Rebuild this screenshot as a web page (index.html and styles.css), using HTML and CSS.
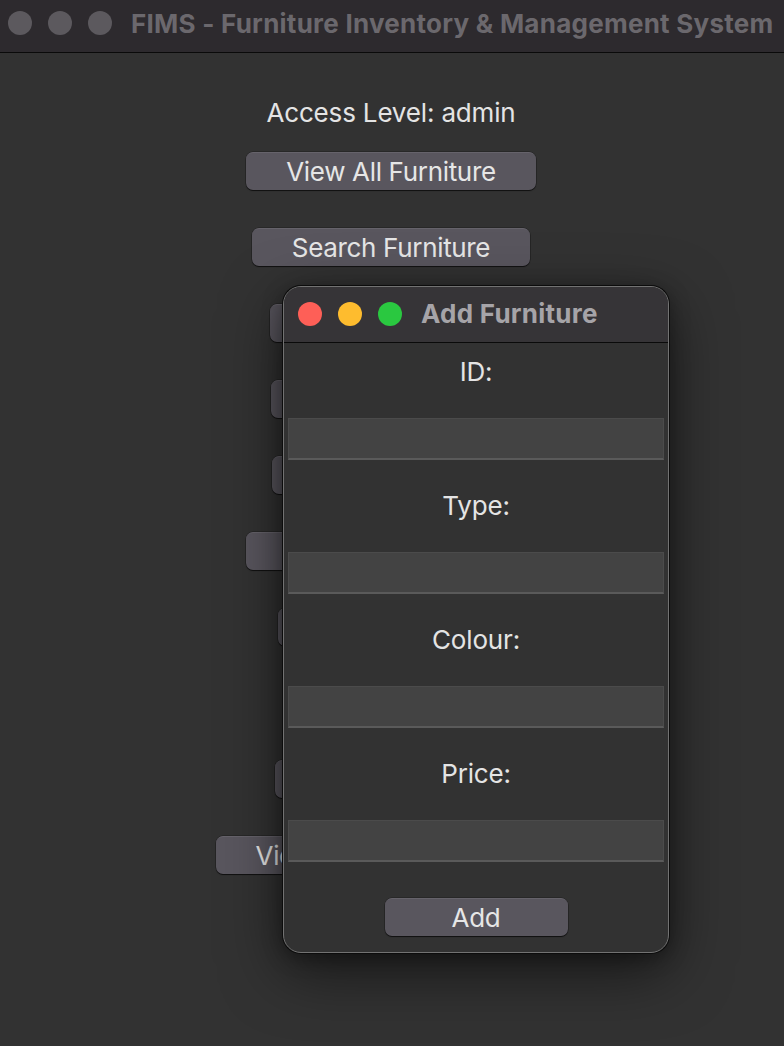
FILE: index.html
```html
<!DOCTYPE html>
<html lang="en">
<head>
<meta charset="utf-8">
<title>FIMS - Furniture Inventory &amp; Management System</title>
<link rel="stylesheet" href="styles.css">
</head>
<body>
<div class="screen">
  <div class="window main-window">
    <header class="titlebar titlebar--inactive">
      <div class="lights">
        <span class="light light--off"></span>
        <span class="light light--off"></span>
        <span class="light light--off"></span>
      </div>
      <div class="titlebar__title">FIMS - Furniture Inventory &amp; Management System</div>
    </header>
    <main class="main-body">
      <div class="access-label">Access Level: admin</div>
      <div class="menu">
        <button class="btn">View All Furniture</button>
        <button class="btn">Search Furniture</button>
        <button class="btn">Add Furniture</button>
        <button class="btn">Edit Furniture</button>
        <button class="btn">Sell Furniture</button>
        <button class="btn">Remove Furniture</button>
        <button class="btn">View Report</button>
        <button class="btn">Log Out</button>
        <button class="btn">Sales Report</button>
        <button class="btn">View Purchase History</button>
      </div>
    </main>
  </div>

  <section class="dialog">
    <header class="titlebar titlebar--active">
      <div class="lights">
        <span class="light light--close"></span>
        <span class="light light--min"></span>
        <span class="light light--max"></span>
      </div>
      <div class="titlebar__title">Add Furniture</div>
    </header>
    <div class="dialog__body">
      <label class="field-label">ID:</label>
      <div class="entry"></div>
      <label class="field-label">Type:</label>
      <div class="entry"></div>
      <label class="field-label">Colour:</label>
      <div class="entry"></div>
      <label class="field-label">Price:</label>
      <div class="entry"></div>
      <button class="btn btn--add">Add</button>
    </div>
  </section>
</div>
</body>
</html>
```
FILE: styles.css
```css
* { box-sizing: border-box; }

html, body {
  margin: 0;
  padding: 0;
  background: #323232;
}

body {
  font-family: Inter, "Noto Sans", "Liberation Sans", sans-serif;
  color: #e2e2e2;
  width: 784px;
  height: 1046px;
  overflow: hidden;
}

.screen {
  position: relative;
  width: 784px;
  height: 1046px;
  overflow: hidden;
}

.main-window {
  display: flex;
  flex-direction: column;
  height: 100%;
  background: #323232;
}

/* ---------- title bars ---------- */
.titlebar {
  display: flex;
  align-items: center;
  flex-shrink: 0;
  border-bottom: 1px solid #0a0a0a;
  font-weight: 700;
  font-size: 26px;
  white-space: nowrap;
}

.titlebar--inactive {
  height: 53px;
  padding: 0 0 6px 8px;
  background: #2d2a2e;
  color: #6b686d;
}

.titlebar--active {
  height: 56px;
  padding: 0 0 2px 14px;
  background: #363437;
  color: #a6a4a8;
}

.lights {
  display: flex;
  gap: 16px;
  margin-right: 19px;
}

.light {
  width: 24px;
  height: 24px;
  border-radius: 50%;
  display: block;
}

.light--off { background: #5c595e; }
.light--close { background: #fe5f57; }
.light--min { background: #febc2e; }
.light--max { background: #2ac840; }

.titlebar__title {
  letter-spacing: 0.25px;
}

/* ---------- main window body ---------- */
.main-body {
  flex: 1;
  display: flex;
  flex-direction: column;
  align-items: center;
  padding-top: 40px;
  padding-right: 2px;
}

.access-label {
  font-size: 26px;
  line-height: 40px;
  letter-spacing: -0.17px;
  color: #e4e4e4;
  margin-bottom: 19px;
}

.menu {
  display: flex;
  flex-direction: column;
  align-items: center;
  gap: 38px;
}

.btn {
  font-family: inherit;
  font-size: 26px;
  letter-spacing: -0.33px;
  color: #e6e6e6;
  height: 38px;
  padding: 0 40px;
  line-height: 36px;
  background: #59565e;
  border: none;
  border-top: 1px solid #66636b;
  border-radius: 7px;
  box-shadow: 0 1px 1px rgba(0, 0, 0, 0.6), 0 0 0 0.5px rgba(0, 0, 0, 0.4);
  white-space: nowrap;
  cursor: default;
}

/* ---------- dialog ---------- */
.dialog {
  position: absolute;
  left: 283px;
  top: 286px;
  width: 386px;
  height: 667px;
  display: flex;
  flex-direction: column;
  background: #323232;
  border: 1px solid #727272;
  border-radius: 18px;
  overflow: hidden;
  box-shadow: 0 0 0 1px #0c0c0c, 0 18px 60px rgba(0, 0, 0, 0.55), 0 4px 20px rgba(0, 0, 0, 0.35);
}

.dialog__body {
  flex: 1;
  display: flex;
  flex-direction: column;
  align-items: center;
  padding: 9px 4px 0;
}

.field-label {
  font-size: 26px;
  line-height: 40px;
  height: 40px;
  letter-spacing: -0.17px;
  color: #e4e4e4;
  margin-bottom: 26px;
}

.entry {
  align-self: stretch;
  height: 42px;
  background: #434343;
  border: 1px solid #4b4b4b;
  border-bottom: 2px solid #5a5a5a;
  margin-bottom: 26px;
}

.btn--add {
  width: 183px;
  padding: 0;
  margin-top: 10px;
}
```
